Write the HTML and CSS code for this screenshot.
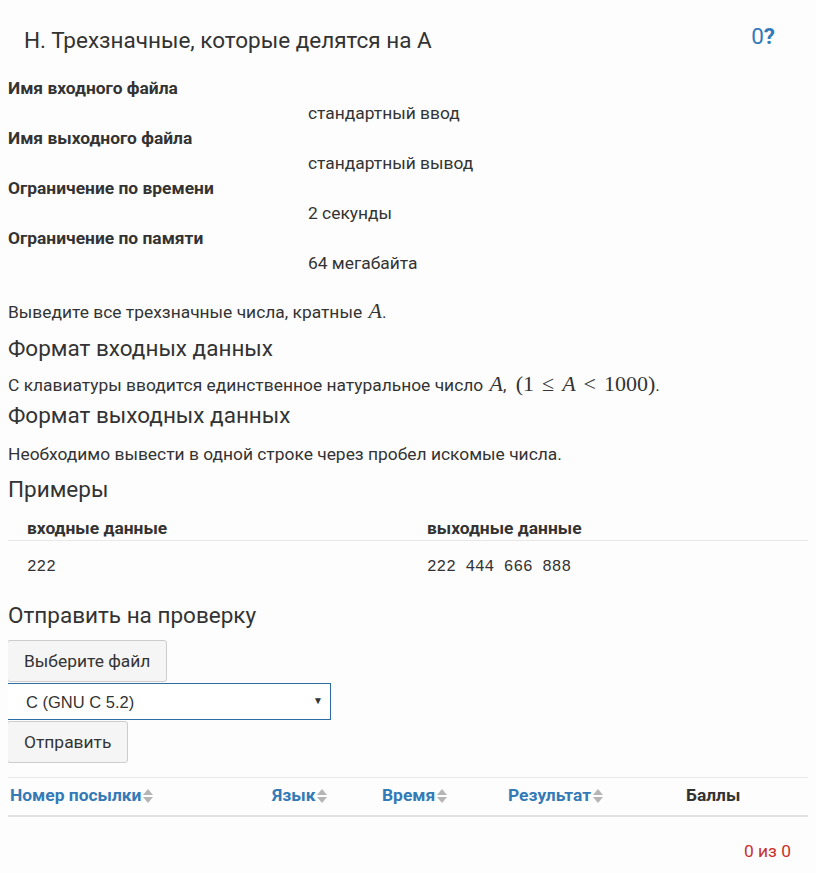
FILE: index.html
```html
<!DOCTYPE html>
<html lang="ru">
<head>
    <meta charset="UTF-8">
    <meta name="viewport" content="width=device-width, initial-scale=1.0">
    <title>Трехзначные, которые делятся на А</title>
    <link rel="stylesheet" href="styles.css">
</head>
<body>
    <div class="problem-header">
        <h1 class="problem-title">Н. Трехзначные, которые делятся на А</h1>
        <div class="score">0<span class="help">?</span></div>
    </div>

    <dl class="limits">
        <dt>Имя входного файла</dt>
        <dd>стандартный ввод</dd>
        <dt>Имя выходного файла</dt>
        <dd>стандартный вывод</dd>
        <dt>Ограничение по времени</dt>
        <dd>2 секунды</dd>
        <dt>Ограничение по памяти</dt>
        <dd>64 мегабайта</dd>
    </dl>

    <div class="legend">
        <p>Выведите все трехзначные числа, кратные <span class="math"><i>A</i></span>.</p>
        <h3>Формат входных данных</h3>
        <p>С клавиатуры вводится единственное натуральное число <span class="math"><i>A</i></span>, <span class="math range">(1<span class="rel">&le;</span><i>A</i><span class="rel">&lt;</span>1000)</span>.</p>
        <h3 class="output-title">Формат выходных данных</h3>
        <p>Необходимо вывести в одной строке через пробел искомые числа.</p>
        <h3 class="samples-title">Примеры</h3>
        <table class="samples">
            <thead>
                <tr><th>входные данные</th><th>выходные данные</th></tr>
            </thead>
            <tbody>
                <tr><td><pre>222</pre></td><td><pre>222 444 666 888</pre></td></tr>
            </tbody>
        </table>
    </div>

    <h3 class="submit-title">Отправить на проверку</h3>
    <form class="submit-form">
        <label class="btn">Выберите файл</label>
        <div class="select-box">
            <select class="lang-select">
                <option>C (GNU C 5.2)</option>
            </select>
            <span class="caret">&#9660;</span>
        </div>
        <button type="button" class="btn">Отправить</button>
    </form>

    <table class="runs">
        <thead>
            <tr>
                <th class="col-id"><a href="#">Номер посылки</a><span class="sort"></span></th>
                <th class="col-lang"><a href="#">Язык</a><span class="sort"></span></th>
                <th class="col-time"><a href="#">Время</a><span class="sort"></span></th>
                <th class="col-result"><a href="#">Результат</a><span class="sort"></span></th>
                <th class="col-score">Баллы</th>
            </tr>
        </thead>
    </table>

    <div class="pager">0 из 0</div>
</body>
</html>
```

FILE: styles.css
```css
body {
    font-family: Roboto, "Noto Sans", sans-serif;
    font-size: 17.4px;
    line-height: 25px;
    margin: 8px;
    background-color: #fdfdfd;
    color: #333;
}

.problem-header {
    display: flex;
    justify-content: space-between;
    align-items: center;
    padding: 16px 33px 0 16px;
}

.problem-title {
    margin: 0;
    font-size: 22.5px;
    font-weight: 400;
    line-height: 32px;
}

.score {
    color: #337ab7;
    font-size: 22.5px;
    line-height: 26px;
    margin-top: -8px;
}

.score .help {
    font-weight: 700;
}

.limits {
    margin: 20px 0 0;
}

.limits dt {
    font-weight: 700;
}

.limits dd {
    margin-left: 300px;
}

.legend {
    margin-top: 24px;
}

.legend p {
    margin: 0;
}

.math {
    font-family: "Liberation Serif", "DejaVu Serif", serif;
    font-size: 22px;
    line-height: 0;
    margin-left: 2px;
}

.math.range {
    margin-left: 5px;
}

.math .rel {
    margin: 0 8px;
}

h3 {
    font-size: 22.5px;
    font-weight: 400;
    line-height: 26px;
    margin: 10px 0 12px;
}

.output-title {
    margin-top: 4px;
    margin-bottom: 14px;
}

.samples-title {
    margin-top: 9px;
}

.samples {
    width: 100%;
    border-collapse: collapse;
    margin-top: 15px;
}

.samples th {
    text-align: left;
    font-weight: 700;
    line-height: 23px;
    padding: 0 19px;
    width: 50%;
    border-bottom: 1px solid #e8e8e8;
}

.samples td {
    padding: 14px 19px 0;
    vertical-align: top;
}

.samples pre {
    margin: 0;
    font-family: "Liberation Mono", monospace;
    font-size: 16px;
}

.submit-title {
    margin-top: 22px;
    margin-bottom: 12px;
}

.submit-form {
    display: flex;
    flex-direction: column;
    align-items: flex-start;
}

.btn {
    font-family: inherit;
    font-size: 17.4px;
    color: #333;
    background-color: #f5f5f5;
    border: 1px solid #ccc;
    border-radius: 3px;
    padding: 0 16px;
    height: 42px;
    line-height: 40px;
    box-sizing: border-box;
    margin-left: -1px;
    cursor: pointer;
}

.select-box {
    position: relative;
    margin: 1px 0 1px -1px;
}

.lang-select {
    appearance: none;
    -webkit-appearance: none;
    width: 324px;
    height: 37px;
    border: 1px solid #2e6da4;
    border-radius: 0;
    background: #fff;
    font-family: "Liberation Sans", Arial, sans-serif;
    font-size: 16.5px;
    color: #333;
    padding: 0 18px;
}

.caret {
    position: absolute;
    right: 8px;
    top: 13px;
    font-size: 10px;
    line-height: 10px;
    color: #333;
    pointer-events: none;
}

.runs {
    width: 100%;
    table-layout: fixed;
    margin-top: 14px;
    border-collapse: collapse;
    border-top: 1px solid #e8e8e8;
    border-bottom: 2px solid #e3e3e3;
}

.runs th {
    text-align: left;
    font-weight: 700;
    padding: 5px 2px 7px;
    height: 25px;
}

.runs a {
    color: #337ab7;
    text-decoration: none;
}

.sort {
    display: inline-block;
    width: 0;
    height: 0;
    margin-left: 2px;
    position: relative;
    top: -4px;
    border-left: 5px solid transparent;
    border-right: 5px solid transparent;
    border-bottom: 6px solid #b5b5b5;
    vertical-align: middle;
}

.sort::after {
    content: "";
    position: absolute;
    left: -5px;
    top: 8px;
    border-left: 5px solid transparent;
    border-right: 5px solid transparent;
    border-top: 6px solid #b5b5b5;
}

.col-id { width: 258px; }
.col-lang { width: 106px; }
.col-time { width: 122px; }
.col-result { width: 174px; }

.pager {
    text-align: right;
    color: #c9302c;
    margin-top: 22px;
    padding-right: 17px;
}
```
